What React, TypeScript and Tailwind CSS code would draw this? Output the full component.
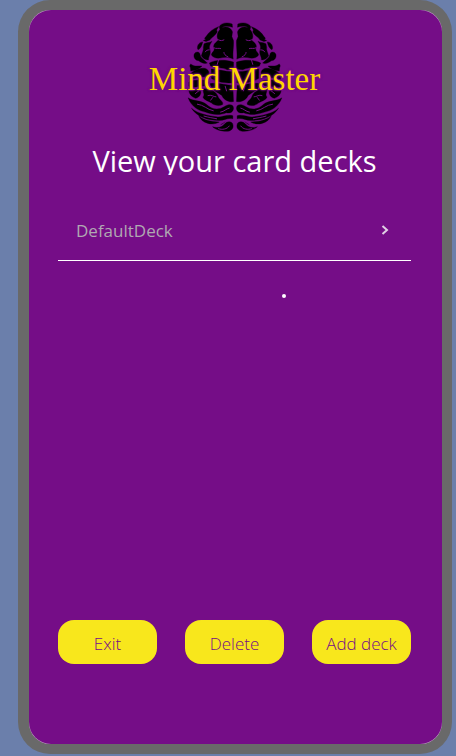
function BrainHalf() {
  return (
    <g>
      <g fill="#000" stroke="#000" strokeWidth="1" strokeLinejoin="round">
        <path d="M108 28C114 16 134 14 147 20L148 30C136 25 122 26 116 31C130 26 144 31 148 44L146 58L151 70C152 90 148 104 150 126C138 119 122 120 110 123C98 124 88 121 84 113C86 104 96 101 92 92C88 82 98 75 106 68C98 60 102 46 110 37Z" />
        <path d="M60 70L68 66C62 66 64 62 68 58C76 44 90 34 106 28L100 38L102 44C94 58 84 60 80 68L68 73Z" />
        <path d="M42 93C42 80 50 75 58 74C56 84 52 94 44 98Z" />
        <path d="M62 80C70 74 78 78 86 72C80 82 76 88 80 98C84 112 74 120 76 128C68 130 58 124 54 116C56 106 62 98 60 90Z" />
        <path d="M32 112C36 103 48 102 50 112C52 124 66 130 72 138C62 141 52 136 46 131C36 130 30 122 32 112Z" />
        <path d="M21 152C17 146 20 139 24 142C34 150 44 145 56 147C48 156 36 162 22 162Z" />
        <path d="M78 138C94 128 126 126 151 135L151 156L132 158C118 150 100 154 82 147Z" />
        <path d="M19 172C30 160 50 151 66 154C78 158 80 172 72 180C58 178 40 184 18 187Z" />
        <path d="M84 156C104 156 124 164 149 164L150 197C130 200 100 196 84 184Z" />
        <path d="M16 196C24 188 60 188 74 192C78 204 64 208 50 208C38 210 24 214 16 208Z" />
        <path d="M80 200C100 196 128 204 149 206L151 254C138 258 120 248 116 236C104 226 84 220 80 200Z" />
        <path d="M16 221C28 224 40 216 52 222C54 232 46 244 36 244C26 240 18 234 16 221Z" />
        <path d="M59 216C76 212 98 222 104 238C108 250 122 254 118 263C108 269 92 266 84 258C74 252 60 248 59 240C66 234 58 224 59 216Z" />
        <path d="M14 243C30 254 54 250 70 263C84 277 104 282 124 269C136 261 151 261 151 274C150 287 140 290 130 288C104 298 84 292 66 286C46 282 24 270 14 243Z" />
        <path d="M24 274C44 292 76 296 104 301C120 300 134 292 149 297L149 306C132 302 124 312 106 311C74 311 40 300 24 274Z" />
        <path d="M46 297C62 312 84 314 108 316C98 322 84 323 74 320C60 316 50 308 46 297Z" />
        <path d="M88 330C104 336 118 330 124 322C132 311 148 314 149 323C153 336 142 345 128 344C114 343 98 340 88 330ZM112 324C118 322 122 318 126 315" />
      </g>
      <g fill="none" stroke="#750d87" strokeWidth="3" strokeLinecap="round">
        <path d="M106 68C112 72 118 70 122 68M92 92C98 96 106 92 112 94M134 119C126 116 122 110 122 106" />
        <path d="M78 98C72 98 68 100 66 104M106 128L102 142M126 208L130 222M46 222L36 230" />
        <path d="M74 236C84 232 90 240 98 240M88 242L82 250M42 262C62 264 70 278 90 282M112 286C124 284 128 276 138 274" />
        <path d="M62 298C76 302 90 304 100 306M106 336C116 340 132 338 138 328" />
      </g>
    </g>
  );
}

function Logo() {
  return (
    <div className="grid h-[110px] place-items-center">
      <svg
        viewBox="8 14 295 332"
        className="col-start-1 row-start-1 h-[110px] w-[98px]"
        aria-hidden="true"
      >
        <BrainHalf />
        <g transform="translate(311 0) scale(-1 1)">
          <BrainHalf />
        </g>
      </svg>
      <span className="z-10 col-start-1 row-start-1 pt-1 font-['Liberation_Serif',serif] text-[33px] leading-8 whitespace-nowrap text-[#ffd600] [text-shadow:0_0_2px_#750d87,0_0_2px_#750d87,0_0_3px_#750d87]">
        Mind Master
      </span>
    </div>
  );
}

function ActionButton({ label }: { label: string }) {
  return (
    <button
      type="button"
      className="h-11 w-[99px] rounded-2xl bg-[#f8e71c] pt-1 text-[17px] leading-6 font-light whitespace-nowrap text-[#750d87]"
    >
      {label}
    </button>
  );
}

export default function App() {
  return (
    <div className="flex min-h-screen bg-[#6b7fab] pr-1 pb-0.5 pl-[18px] font-['Open_Sans','Noto_Sans',sans-serif]">
      <div className="flex flex-1 rounded-[32px] border-10 border-l-11 border-[#696969] bg-[#696969]">
        <div className="flex flex-1 rounded-[21px] bg-[#c9a6cf]">
          <main className="flex flex-1 flex-col rounded-[22px] bg-[#750d87] pt-3 pr-[31px] pb-20 pl-[29px]">
            <Logo />
            <h1 className="mt-2 h-[35px] overflow-hidden text-center text-[29px] leading-[42px] whitespace-nowrap text-white">
              View your card decks
            </h1>
            <ul className="mt-[25px]">
              <li className="border-b border-white">
                <button
                  type="button"
                  className="flex h-[60px] w-full items-center justify-between pr-[22px] pl-[18px] text-[17px] text-[#b0a8b2]"
                >
                  <span className="pt-0.5">DefaultDeck</span>
                  <svg
                    viewBox="0 0 8 10"
                    className="h-2.5 w-2"
                    fill="none"
                    stroke="#e0d0e4"
                    strokeWidth="2"
                    aria-hidden="true"
                  >
                    <path d="M1.5 1L6 5L1.5 9" />
                  </svg>
                </button>
              </li>
            </ul>
            <div className="mt-[33px] flex justify-center pl-[98px]">
              <span className="size-1 rounded-full bg-white" />
            </div>
            <div className="mt-auto flex justify-between">
              <ActionButton label="Exit" />
              <ActionButton label="Delete" />
              <ActionButton label="Add deck" />
            </div>
          </main>
        </div>
      </div>
    </div>
  );
}
